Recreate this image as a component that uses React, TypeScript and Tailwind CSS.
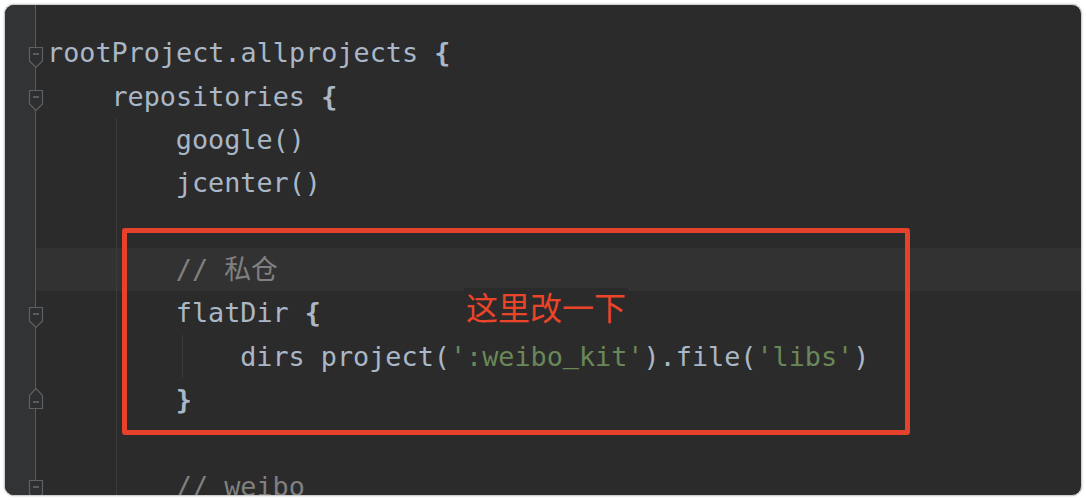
import React from "react";

type Tok = { t: string; c?: string; b?: boolean; f?: string };
type Line = {
  indent: number;
  guides: number[];
  toks: Tok[];
  fold?: "open" | "close";
  hl?: boolean;
};

const TEXT = "text-[#a9b7c6]";
const STR = "text-[#6a8759]";
const CMT = "text-[#808080]";

const lines: Line[] = [
  { indent: 0, guides: [], fold: "open", toks: [{ t: "rootProject.allprojects " }, { t: "{", b: true }] },
  { indent: 1, guides: [], fold: "open", toks: [{ t: "repositories " }, { t: "{", b: true }] },
  { indent: 2, guides: [1], toks: [{ t: "google()" }] },
  { indent: 2, guides: [1], toks: [{ t: "jcenter()" }] },
  { indent: 0, guides: [1], toks: [] },
  { indent: 2, guides: [1], hl: true, toks: [{ t: "// 私仓", c: CMT }] },
  { indent: 2, guides: [1], fold: "open", toks: [{ t: "flatDir " }, { t: "{", b: true }] },
  {
    indent: 3,
    guides: [1, 2],
    toks: [
      { t: "dirs project(" },
      { t: "':weibo", c: STR },
      { t: "_", c: STR, f: "font-['Liberation_Mono',monospace]" },
      { t: "kit'", c: STR },
      { t: ").file(" },
      { t: "'libs'", c: STR },
      { t: ")" },
    ],
  },
  { indent: 2, guides: [1], fold: "close", toks: [{ t: "}", b: true }] },
  { indent: 0, guides: [1], toks: [] },
  { indent: 2, guides: [1], fold: "open", toks: [{ t: "// weibo", c: CMT }] },
];

function FoldMark({ kind }: { kind: "open" | "close" }) {
  if (kind === "open") {
    return (
      <svg width="16" height="22" viewBox="0 0 16 22" className="relative z-10 ml-[23px] mt-[15.5px] overflow-visible">
        <path d="M1.5 0.5H14.5V14L8 20.5L1.5 14Z" fill="#2e2f31" stroke="#5f6062" strokeWidth="1.2" />
        <path d="M5 7H11" stroke="#6a6b6d" strokeWidth="1.4" />
      </svg>
    );
  }
  return (
    <svg width="16" height="22" viewBox="0 0 16 22" className="relative z-10 ml-[23px] mt-[10.5px] overflow-visible">
      <path d="M8 0.5L14.5 7.5V20.5H1.5V7.5Z" fill="#2e2f31" stroke="#5f6062" strokeWidth="1.2" />
      <path d="M5 14H11" stroke="#6a6b6d" strokeWidth="1.4" />
    </svg>
  );
}

export default function App() {
  return (
    <div className="w-[1086px] h-[500px] bg-white p-[4px]">
      <div className="relative flex h-[492px] overflow-hidden rounded-[10px] border border-[#cfcfcf] bg-[#2b2b2b] shadow-[0_0_2px_rgba(0,0,0,0.25)]">
        {/* gutter */}
        <div className="w-[31px] shrink-0 border-r border-[#58595b] bg-[#313335] pt-[26.33px]">
          {lines.map((l, i) => (
            <div key={i} className="flex h-[43.33px] items-start">
              {l.fold && <FoldMark kind={l.fold} />}
            </div>
          ))}
        </div>

        {/* code */}
        <div
          className="flex-1 pt-[26.33px] text-[26.8px]"
          style={{ fontFamily: '"DejaVu Sans Mono", "Noto Sans CJK SC", monospace' }}
        >
          {lines.map((l, i) => (
            <div
              key={i}
              className={`flex h-[43.33px] pl-[11px] leading-[43.33px] whitespace-pre ${TEXT} ${l.hl ? "bg-[#323232]" : ""}`}
            >
              {Array.from({ length: l.indent }).map((_, k) => (
                <div key={k} className={`h-full w-[64.4px] shrink-0 ${k === 2 ? "pl-[6px]" : "pl-[5px]"}`}>
                  {l.guides.includes(k) && <div className="h-full border-l border-[#3b3b3b]" />}
                </div>
              ))}
              {l.indent === 0 && l.guides.includes(1) && (
                <>
                  <div className="h-full w-[64.4px] shrink-0" />
                  <div className="h-full w-[64.4px] shrink-0 pl-[5px]">
                    <div className="h-full border-l border-[#3b3b3b]" />
                  </div>
                </>
              )}
              <span>
                {l.toks.map((tk, j) => (
                  <span key={j} className={`${tk.c ?? ""} ${tk.b ? "font-bold" : ""} ${tk.f ?? ""}`}>
                    {tk.t}
                  </span>
                ))}
              </span>
            </div>
          ))}
        </div>

        {/* annotation */}
        <div className="absolute left-[117px] top-[223px] h-[207px] w-[788px] rounded-[3px] border-[5px] border-[#e6412a]" />
        <div
          className="absolute left-[459px] top-[283px] bg-[#2b2b2b] px-[2px] text-[32px] leading-[36px] text-[#ea4429]"
          style={{ fontFamily: '"Noto Sans CJK SC", sans-serif' }}
        >
          这里改一下
        </div>
      </div>
    </div>
  );
}
